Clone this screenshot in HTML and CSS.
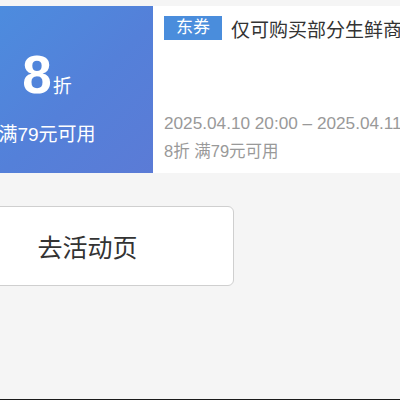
FILE: index.html
```html
<!DOCTYPE html>
<html lang="zh">
<head>
<meta charset="utf-8">
<link rel="stylesheet" href="styles.css">
</head>
<body>
<div class="page">
  <div class="coupon">
    <div class="coupon-left">
      <div class="discount"><span class="num">8</span><span class="unit">折</span></div>
      <div class="cond">满79元可用</div>
    </div>
    <div class="coupon-right">
      <div class="title-row"><span class="tag">东券</span><span class="title">仅可购买部分生鲜商品</span></div>
      <div class="date">2025.04.10 20:00 – 2025.04.11 23:59</div>
      <div class="rule">8折 满79元可用</div>
    </div>
  </div>
  <div class="btn">去活动页</div>
</div>
</body>
</html>
```
FILE: styles.css
```css
html, body {
  margin: 0;
  padding: 0;
}
body {
  background: #f5f5f5;
  font-family: "Liberation Sans", "Noto Sans CJK SC", sans-serif;
  min-height: 100vh;
  box-sizing: border-box;
  border-bottom: 1px solid #1a1a1a;
  overflow: hidden;
}
.page {
  margin-left: -59px;
  padding-top: 6px;
  width: 520px;
}
.coupon {
  display: flex;
  height: 167px;
  background: #fff;
}
.coupon-left {
  width: 212px;
  flex: none;
  background: linear-gradient(135deg, #4a90e0 0%, #5480d9 60%, #5b7bd6 100%);
  color: #fff;
  display: flex;
  flex-direction: column;
  align-items: center;
  padding-top: 43px;
  box-sizing: border-box;
}
.discount {
  display: flex;
  align-items: baseline;
  line-height: 52px;
}
.num {
  font-size: 53px;
  font-weight: bold;
}
.unit {
  font-size: 19px;
  margin-left: 1px;
}
.cond {
  font-size: 19px;
  margin-top: 9px;
  line-height: 26px;
}
.coupon-right {
  flex: 1;
  padding: 10px 0 0 11px;
  display: flex;
  flex-direction: column;
  white-space: nowrap;
}
.title-row {
  display: flex;
  align-items: center;
  height: 24px;
}
.tag {
  background: #4a8ddc;
  color: #fff;
  font-size: 17px;
  height: 24px;
  line-height: 24px;
  padding: 0 12px;
  margin-right: 9px;
}
.title {
  font-size: 19px;
  color: #333;
}
.date {
  margin-top: 72px;
  font-size: 17.2px;
  color: #999;
  line-height: 22px;
}
.rule {
  margin-top: 7px;
  font-size: 16.5px;
  color: #999;
  line-height: 20px;
}
.btn {
  margin-top: 33px;
  width: 293px;
  height: 80px;
  box-sizing: border-box;
  border: 1px solid #cfcfcf;
  border-radius: 6px;
  background: #fff;
  display: flex;
  align-items: center;
  justify-content: center;
  font-size: 25px;
  color: #333;
}
```
